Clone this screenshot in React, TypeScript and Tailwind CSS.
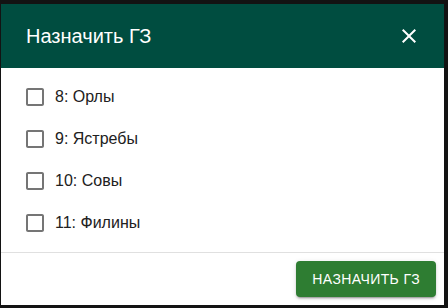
import React, { useState } from 'react';

const teams = [
  { id: 8, name: 'Орлы' },
  { id: 9, name: 'Ястребы' },
  { id: 10, name: 'Совы' },
  { id: 11, name: 'Филины' },
];

export default function App() {
  const [checked, setChecked] = useState<number[]>([]);

  const toggle = (id: number) =>
    setChecked((prev) => (prev.includes(id) ? prev.filter((x) => x !== id) : [...prev, id]));

  return (
    <div className="w-[448px] h-[308px] bg-[#131313] pt-[4px] pl-[1px] font-['Liberation_Sans',Arial,sans-serif]">
      <div className="w-[443px] h-[301px] bg-white flex flex-col">
        {/* Header */}
        <div className="h-[64px] bg-[#004d40] flex items-center justify-between pl-[25px] pr-[23px]">
          <h2 className="text-[20px] text-white font-normal leading-none">Назначить ГЗ</h2>
          <button className="w-6 h-6 flex items-center justify-center text-white">
            <svg width="24" height="24" viewBox="0 0 24 24" fill="currentColor">
              <path d="M19 6.41 17.59 5 12 10.59 6.41 5 5 6.41 10.59 12 5 17.59 6.41 19 12 13.41 17.59 19 19 17.59 13.41 12z" />
            </svg>
          </button>
        </div>

        {/* List */}
        <div className="flex-1 py-2 border-b border-[#e0e0e0]">
          {teams.map((t) => (
            <label key={t.id} className="h-[42px] flex items-center pl-[22px] cursor-pointer">
              <span className="w-6 h-6 flex items-center justify-center mr-[8px]">
                <input
                  type="checkbox"
                  className="hidden"
                  checked={checked.includes(t.id)}
                  onChange={() => toggle(t.id)}
                />
                <svg width="24" height="24" viewBox="0 0 24 24" fill="#757575">
                  {checked.includes(t.id) ? (
                    <path d="M19 3H5c-1.11 0-2 .9-2 2v14c0 1.1.89 2 2 2h14c1.11 0 2-.9 2-2V5c0-1.1-.89-2-2-2zm-9 14-5-5 1.41-1.41L10 14.17l7.59-7.59L19 8l-9 9z" />
                  ) : (
                    <path d="M19 5v14H5V5h14m0-2H5c-1.1 0-2 .9-2 2v14c0 1.1.9 2 2 2h14c1.1 0 2-.9 2-2V5c0-1.1-.9-2-2-2z" />
                  )}
                </svg>
              </span>
              <span className="text-[16px] text-[#212121] leading-none">
                {t.id}: {t.name}
              </span>
            </label>
          ))}
        </div>

        {/* Footer */}
        <div className="h-[52px] flex items-center justify-end pr-2">
          <button className="h-9 px-4 bg-[#2e7d32] text-white text-[14px] uppercase tracking-[0.4px] rounded-[4px] shadow-[0_3px_1px_-2px_rgba(0,0,0,0.2),0_2px_2px_0_rgba(0,0,0,0.14),0_1px_5px_0_rgba(0,0,0,0.12)]">
            Назначить ГЗ
          </button>
        </div>
      </div>
    </div>
  );
}
